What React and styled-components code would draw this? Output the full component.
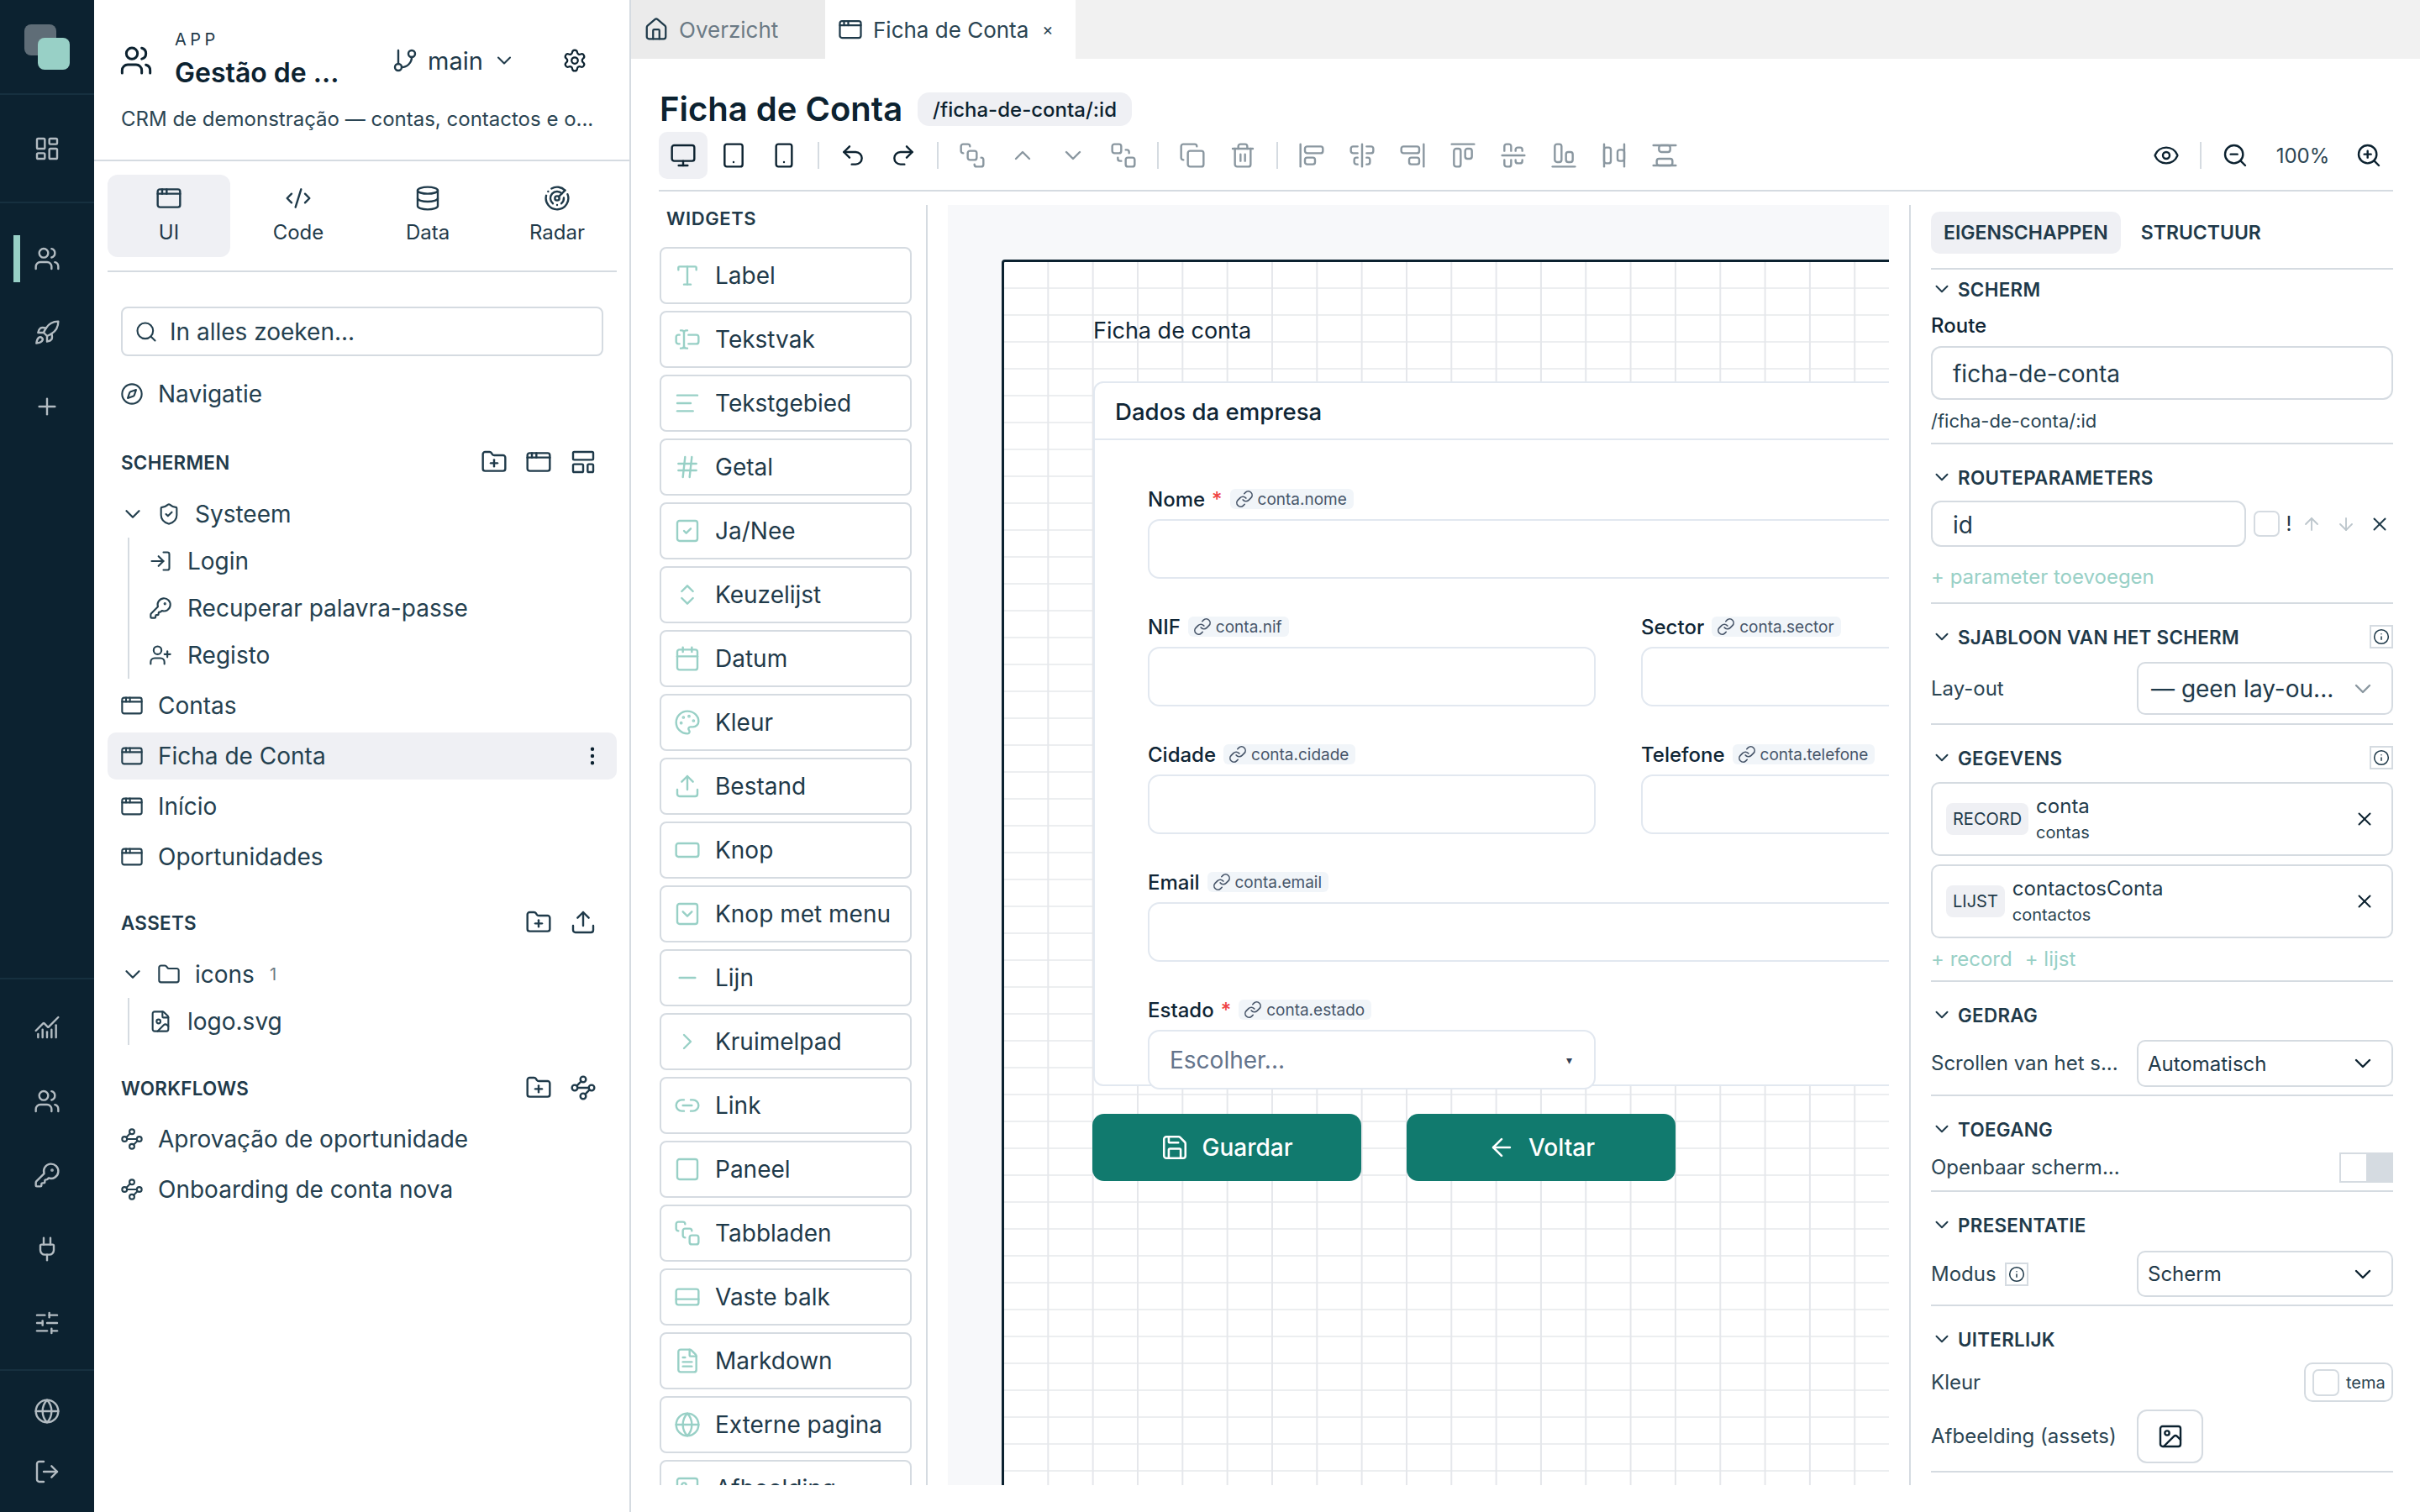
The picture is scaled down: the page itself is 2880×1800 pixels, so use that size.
import React from 'react';
import styled, { createGlobalStyle } from 'styled-components';
import {
  AlignCenterHorizontal, AlignCenterVertical, AlignEndHorizontal, AlignEndVertical,
  AlignHorizontalSpaceBetween, AlignLeft, AlignStartHorizontal, AlignStartVertical,
  AlignVerticalSpaceBetween, AppWindow, ArrowDown, ArrowLeft, ArrowUp, BringToFront,
  Calendar, ChartNoAxesCombined, ChevronDown, ChevronRight, ChevronUp, ChevronsUpDown,
  CodeXml, Compass, Copy, Database, EllipsisVertical, Eye, FileImage, FileText, Folder,
  FolderPlus, GitBranch, Globe, Hash, House, Image, Info, KeyRound, LayoutDashboard,
  LayoutTemplate, Link, Link2, LogIn, LogOut, Minus, Monitor, Palette, Plug,
  Plus, Radar, RectangleHorizontal, Redo2, Rocket, Save, Search, SendToBack, Settings,
  ShieldCheck, SlidersHorizontal, Smartphone, Square, SquareCheck, SquareChevronDown,
  SquareStack, Tablet, TextCursorInput, Trash2, Type, Undo2, Upload, UserPlus, Users,
  Waypoints, X, ZoomIn, ZoomOut,
} from 'lucide-react';

const GlobalStyle = createGlobalStyle`
  html, body {
    margin: 0;
    padding: 0;
    background: #fff;
  }
  body {
    font-family: Inter, "Noto Sans", sans-serif;
    color: #1f3a4a;
  }
  * {
    box-sizing: border-box;
  }
  .lucide {
    stroke-width: 1.8;
    flex-shrink: 0;
  }
`;

const Page = styled.div`
  display: flex;
  width: 2880px;
  height: 1800px;
  overflow: hidden;
  background: #fff;
`;

/* ---------- left rail ---------- */

const Rail = styled.nav`
  flex: 0 0 112px;
  display: flex;
  flex-direction: column;
  background: #0c2230;
  color: #b3bcc2;
`;

const RailLogo = styled.div`
  position: relative;
  height: 113px;
  border-bottom: 2px solid #16303f;
`;

const LogoBack = styled.div`
  position: absolute;
  left: 29px;
  top: 29px;
  width: 38px;
  height: 37px;
  border-radius: 8px;
  background: #5f6d77;
`;

const LogoFront = styled.div`
  position: absolute;
  left: 45px;
  top: 45px;
  width: 38px;
  height: 38px;
  border-radius: 8px;
  background: #98d0c6;
`;

const RailGroup = styled.div`
  display: flex;
  flex-direction: column;
  flex: ${(p) => (p.$grow ? 1 : 'none')};
  padding-top: ${(p) => p.$top || 0}px;
  padding-bottom: ${(p) => p.$bottom || 0}px;
  border-top: ${(p) => (p.$lineTop ? '2px solid #16303f' : 'none')};
  border-bottom: ${(p) => (p.$line ? '2px solid #16303f' : 'none')};
`;

const RailItem = styled.div`
  position: relative;
  display: flex;
  align-items: center;
  justify-content: center;
  height: ${(p) => p.$h || 88}px;

  ${(p) => p.$active && `
    &::before {
      content: '';
      position: absolute;
      left: 16px;
      top: 16px;
      width: 8px;
      height: 56px;
      background: #98d0c6;
    }
  `}
`;

/* ---------- sidebar ---------- */

const Sidebar = styled.aside`
  flex: 0 0 639px;
  min-width: 0;
  border-right: 2px solid #d5dbe1;
  display: flex;
  flex-direction: column;
`;

const AppHeader = styled.header`
  height: 192px;
  border-bottom: 2px solid #d5dbe1;
  padding: 30px 50px 0 30px;
`;

const AppRow = styled.div`
  display: flex;
  align-items: center;
  height: 84px;
  color: #0c2230;
`;

const AppTitleBox = styled.div`
  flex: 0 0 258px;
  margin-left: 26px;
  display: flex;
  flex-direction: column;
  padding-top: 1px;
`;

const AppEyebrow = styled.div`
  font-size: 20px;
  line-height: 24px;
  letter-spacing: 4.5px;
  color: #1f3a4a;
  margin-top: -4px;
`;

const AppTitle = styled.div`
  font-size: 32px;
  line-height: 40px;
  font-weight: 600;
  margin-top: 8px;
  color: #0c2230;
`;

const Branch = styled.div`
  display: flex;
  align-items: center;
  font-size: 29px;
  color: #1f3a4a;
  gap: 11px;
`;

const GearSlot = styled.div`
  margin-left: auto;
  display: flex;
`;

const AppDesc = styled.div`
  margin: 12px 0 0 2px;
  font-size: 24px;
  line-height: 32px;
  white-space: nowrap;
  color: #2b4553;
`;

const ModeTabs = styled.div`
  display: flex;
  gap: 8px;
  margin: 16px 15px 0 16px;
  padding-bottom: 16px;
  border-bottom: 2px solid #d5dbe1;
`;

const ModeTab = styled.div`
  flex: 0 0 146px;
  height: 98px;
  border-radius: 12px;
  background: ${(p) => (p.$active ? '#eff0f4' : 'transparent')};
  display: flex;
  flex-direction: column;
  align-items: center;
  padding-top: 12px;
  gap: 10px;
  font-size: 24px;
  line-height: 30px;
  color: #1f3a4a;
`;

const SearchBox = styled.div`
  display: flex;
  align-items: center;
  gap: 14px;
  height: 59px;
  margin: 41px 31px 0 32px;
  padding-left: 14px;
  border: 2px solid #d5dbe1;
  border-radius: 8px;
  font-size: 28px;
  color: #24404f;
`;

const Tree = styled.div`
  display: flex;
  flex-direction: column;
  margin: 15px 15px 0 16px;
`;

const TreeRow = styled.div`
  flex: 0 0 56px;
  display: flex;
  align-items: center;
  gap: 17px;
  margin: ${(p) => (p.$flat ? '0' : '2px 0')};
  padding-left: 15px;
  border-radius: 10px;
  font-size: 28px;
  color: #24404f;
  background: ${(p) => (p.$active ? '#eff0f4' : 'transparent')};
`;

const TreeChevron = styled.span`
  display: flex;
  margin-right: -3px;
`;

const TreeChildren = styled.div`
  margin: ${(p) => p.$before || 0}px 0 ${(p) => p.$after || 0}px 24px;
  border-left: 2px solid #d5dbe1;
`;

const TreeChild = styled.div`
  display: flex;
  align-items: center;
  gap: 18px;
  height: 56px;
  padding-left: 23px;
  font-size: 28px;
  color: #24404f;
`;

const RowMenu = styled.div`
  margin-left: auto;
  display: flex;
  padding-right: 15px;
  color: #0c2230;
`;

const Count = styled.span`
  font-size: 20px;
  color: #6b7a85;
  margin-left: 1px;
`;

const SectionHead = styled.div`
  flex: 0 0 40px;
  display: flex;
  align-items: center;
  margin-top: ${(p) => p.$top}px;
  margin-bottom: ${(p) => p.$bottom}px;
  padding: 0 24px 0 16px;
  font-size: 22.4px;
  font-weight: 600;
  letter-spacing: 0.3px;
  color: #1f3a4a;
`;

const SectionTools = styled.div`
  margin-left: auto;
  display: flex;
  gap: 21px;
  color: #1f3a4a;
`;

/* ---------- main column ---------- */

const Main = styled.main`
  flex: 1;
  min-width: 0;
  display: flex;
  flex-direction: column;
`;

const TabBar = styled.div`
  display: flex;
  height: 70px;
  background: #f1f1f1;
`;

const DocTab = styled.div`
  flex: 0 0 ${(p) => p.$w}px;
  display: flex;
  align-items: center;
  gap: 12px;
  padding-left: 15px;
  font-size: 26px;
  background: ${(p) => (p.$active ? '#fff' : '#ebebeb')};
  color: ${(p) => (p.$active ? '#2b4553' : '#6b7a85')};
`;

const DocIcon = styled.span`
  display: flex;
  color: #1f3a4a;
`;

const TabClose = styled.span`
  margin-left: 4px;
  font-size: 20px;
  color: #2b4553;
`;

const ScreenHead = styled.div`
  display: flex;
  align-items: center;
  height: 40px;
  margin: 40px 0 0 34px;
  gap: 18px;
`;

const ScreenTitle = styled.h1`
  margin: 0;
  font-size: 40px;
  line-height: 40px;
  font-weight: 600;
  color: #0c2230;
`;

const RoutePill = styled.div`
  display: flex;
  align-items: center;
  height: 40px;
  padding: 0 18px;
  border-radius: 14px;
  background: #eff0f4;
  font-size: 24px;
  font-weight: 500;
  color: #0c2230;
`;

const Toolbar = styled.div`
  display: flex;
  align-items: center;
  height: 70px;
  margin: 8px 32px 0 33px;
  padding-bottom: 14px;
  border-bottom: 2px solid #d5dbe1;
`;

const ToolBtn = styled.div`
  flex: 0 0 58px;
  height: 56px;
  margin-right: 2px;
  display: flex;
  align-items: center;
  justify-content: center;
  border-radius: 10px;
  background: ${(p) => (p.$active ? '#eff0f4' : 'transparent')};
  color: ${(p) => (p.$off ? '#8a97a0' : '#0c2230')};

  &:last-child {
    margin-right: 0;
  }
`;

const ToolSep = styled.div`
  flex: 0 0 2px;
  height: 32px;
  margin: 0 11px 0 9px;
  background: #d5dbe1;
`;

const ToolSpacer = styled.div`
  flex: 1;
`;

const ZoomText = styled.div`
  flex: 0 0 99px;
  text-align: center;
  font-size: 24px;
  color: #2b4553;
`;

const Workspace = styled.div`
  display: flex;
  height: 1524px;
  margin: 16px 32px 0 33px;
`;

/* ---------- widgets ---------- */

const WidgetPane = styled.div`
  flex: 0 0 320px;
  border-right: 2px solid #d5dbe1;
  overflow: hidden;
`;

const PaneTitle = styled.div`
  margin: 4px 0 22px 9px;
  font-size: 22px;
  line-height: 24px;
  font-weight: 600;
  letter-spacing: 0.6px;
  color: #1f3a4a;
`;

const WidgetList = styled.div`
  display: flex;
  flex-direction: column;
  gap: 8px;
  width: 300px;
  margin-left: 1px;
`;

const WidgetItem = styled.div`
  flex: 0 0 68px;
  display: flex;
  align-items: center;
  gap: 17px;
  padding-left: 15px;
  border: 2px solid #d5dbe1;
  border-radius: 8px;
  font-size: 28px;
  color: #1f3a4a;
`;

const WidgetIcon = styled.span`
  display: flex;
  color: #98d0c6;
`;

/* ---------- canvas ---------- */

const Canvas = styled.div`
  flex: 0 0 1120px;
  margin-left: 24px;
  background: #f7f8fa;
  overflow: hidden;
  padding: 65px 0 0 64px;
`;

const Frame = styled.div`
  width: 1900px;
  height: 1700px;
  border: 3px solid #0c2230;
  border-radius: 4px;
  padding: 65px 0 0 106px;
  color: #0f172a;
  background-color: #fff;
  background-image:
    linear-gradient(to right, transparent 51.33px, #e5e7eb 51.33px),
    linear-gradient(to bottom, transparent 30px, #eceef0 30px);
  background-size: 53.33px 32px;
`;

const FrameTitle = styled.div`
  font-size: 27px;
  line-height: 34px;
  color: #0f2535;
`;

const FormCard = styled.section`
  width: 1500px;
  height: 839px;
  margin-top: 43px;
  background: #fff;
  border: 2px solid #e2e8f0;
  border-radius: 12px;
`;

const FormCardHead = styled.div`
  height: 68px;
  display: flex;
  align-items: center;
  padding: 2px 0 0 24px;
  border-bottom: 2px solid #e2e8f0;
  font-size: 27.6px;
  font-weight: 500;
  color: #0f2535;
`;

const FormGrid = styled.div`
  display: grid;
  grid-template-columns: 533px 533px;
  column-gap: 54px;
  row-gap: 45px;
  padding: 58px 0 0 63px;
`;

const Field = styled.div`
  grid-column: ${(p) => (p.$full ? '1 / -1' : 'auto')};
  display: flex;
  flex-direction: column;
  gap: 12px;
`;

const FieldLabel = styled.div`
  display: flex;
  align-items: center;
  height: 24px;
  gap: 9px;
  font-size: 24px;
  font-weight: 500;
  color: #0f2535;
`;

const Star = styled.span`
  color: #ef4444;
  margin-left: -1px;
`;

const BindChip = styled.span`
  display: flex;
  align-items: center;
  height: 24px;
  padding: 0 8px 0 6px;
  gap: 5px;
  border-radius: 6px;
  background: #f1f5f9;
  font-size: 19px;
  font-weight: 400;
  color: #475569;
`;

const FormInput = styled.div`
  height: 71px;
  border: 2px solid #e2e8f0;
  border-radius: 14px;
  background: #fff;
`;

const FormSelect = styled(FormInput)`
  display: flex;
  align-items: center;
  justify-content: space-between;
  padding: 0 26px 0 24px;
  font-size: 28px;
  color: #64748b;
`;

const SelectArrow = styled.span`
  font-size: 14px;
  color: #334155;
`;

const FormActions = styled.div`
  display: flex;
  gap: 54px;
  margin: 33px 0 0 -1px;
`;

const PrimaryButton = styled.div`
  flex: 0 0 320px;
  height: 80px;
  display: flex;
  align-items: center;
  justify-content: center;
  gap: 15px;
  border-radius: 14px;
  background: #117a6e;
  color: #fff;
  font-size: 28px;
  font-weight: 500;
`;

/* ---------- properties ---------- */

const PropsPane = styled.div`
  flex: 1;
  min-width: 0;
  margin-left: 24px;
  padding-left: 24px;
  border-left: 2px solid #d5dbe1;
  overflow: hidden;
`;

const PropsTabs = styled.div`
  display: flex;
  gap: 9px;
  padding: 8px 0 17px;
  border-bottom: 2px solid #d5dbe1;
`;

const PropsTab = styled.div`
  display: flex;
  align-items: center;
  height: 50px;
  padding: 0 15px;
  border-radius: 10px;
  background: ${(p) => (p.$active ? '#eff0f4' : 'transparent')};
  font-size: 23px;
  font-weight: 600;
  color: #1f3a4a;
`;

const PropSection = styled.section`
  padding-top: ${(p) => p.$top ?? 24}px;
  padding-bottom: ${(p) => p.$bottom ?? 10}px;
  border-bottom: 2px solid #d5dbe1;
`;

const PropTitle = styled.div`
  display: flex;
  align-items: center;
  gap: 6px;
  height: 30px;
  font-size: 22.4px;
  font-weight: 600;
  letter-spacing: 0.3px;
  color: #1f3a4a;
`;

const InfoTile = styled.span`
  flex: 0 0 28px;
  width: 28px;
  height: 28px;
  margin-left: ${(p) => (p.$auto ? 'auto' : '0')};
  display: flex;
  align-items: center;
  justify-content: center;
  border: 2px solid #d5dbe1;
  color: #1f3a4a;
`;

const PropLabel = styled.div`
  font-size: 24px;
  line-height: 30px;
  white-space: nowrap;
  font-weight: ${(p) => (p.$strong ? 500 : 400)};
  margin-top: ${(p) => p.$top || 0}px;
  color: ${(p) => (p.$strong ? '#0f2535' : '#2b4553')};
  display: flex;
  align-items: center;
  gap: 10px;
`;

const TextBox = styled.div`
  display: flex;
  align-items: center;
  flex: 0 0 auto;
  height: ${(p) => p.$h}px;
  width: ${(p) => (p.$w ? `${p.$w}px` : '100%')};
  margin-top: ${(p) => p.$top || 0}px;
  padding: 2px 0 0 24px;
  border: 2px solid #d5dbe1;
  border-radius: 12px;
  font-size: 28px;
  color: #1f3a4a;
`;

const Hint = styled.div`
  margin-top: 10px;
  font-size: 22px;
  line-height: 30px;
  color: #2b4553;
`;

const ParamRow = styled.div`
  display: flex;
  align-items: center;
  margin-top: 13px;
`;

const ParamCheck = styled.span`
  flex: 0 0 31px;
  height: 31px;
  margin-left: 9px;
  border: 2px solid #d5dbe1;
  border-radius: 7px;
`;

const ParamCell = styled.span`
  flex: 0 0 ${(p) => p.$w}px;
  display: flex;
  justify-content: center;
  font-size: 24px;
  color: ${(p) => (p.$off ? '#bcc6cc' : '#1f3a4a')};
`;

const AddLink = styled.div`
  display: flex;
  gap: 15px;
  margin-top: ${(p) => p.$top}px;
  font-size: 24px;
  line-height: 30px;
  color: #98d0c6;
`;

const PropRow = styled.div`
  display: flex;
  align-items: center;
  justify-content: space-between;
  margin-top: ${(p) => p.$top}px;
`;

const SelectBox = styled.div`
  flex: 0 0 305px;
  display: flex;
  align-items: center;
  justify-content: space-between;
  height: ${(p) => p.$h}px;
  padding: 0 18px 0 ${(p) => p.$pad || 11}px;
  border: 2px solid #d5dbe1;
  border-radius: 10px;
  font-size: ${(p) => p.$size || 24}px;
  color: #1f3a4a;
`;

const SelectIcon = styled.span`
  display: flex;
  color: ${(p) => (p.$muted ? '#8a97a0' : '#0c2230')};
`;

const DataCard = styled.div`
  display: flex;
  align-items: center;
  height: 88px;
  margin-top: ${(p) => p.$top}px;
  padding: 0 19px 0 16px;
  border: 2px solid #d5dbe1;
  border-radius: 10px;
`;

const DataBadge = styled.span`
  display: flex;
  align-items: center;
  height: 38px;
  padding: 0 8px;
  border-radius: 8px;
  background: #eff0f4;
  font-size: 20px;
  color: #1f3a4a;
`;

const DataText = styled.div`
  display: flex;
  flex-direction: column;
  margin-left: 9px;
  color: #1f3a4a;
`;

const DataName = styled.div`
  font-size: 24px;
  line-height: 30px;
  margin-bottom: 2px;
`;

const DataSource = styled.div`
  font-size: 20px;
  line-height: 28px;
  color: #2b4553;
`;

const DataClose = styled.span`
  margin-left: auto;
  display: flex;
  color: #0c2230;
`;

const ToggleBox = styled.div`
  flex: 0 0 64px;
  height: 36px;
  display: flex;
  justify-content: flex-end;
  border: 2px solid #d5dbe1;
  background: #fff;
`;

const ToggleFill = styled.div`
  width: 30px;
  background: #d5dbe1;
`;

const ColorBox = styled.div`
  display: flex;
  align-items: center;
  gap: 8px;
  width: 106px;
  height: 47px;
  padding-left: 8px;
  border: 2px solid #d5dbe1;
  border-radius: 10px;
  font-size: 20px;
  color: #2b4553;
`;

const ColorSwatch = styled.span`
  flex: 0 0 32px;
  height: 32px;
  border: 2px solid #d5dbe1;
  border-radius: 7px;
`;

const ImageRow = styled(PropRow)`
  justify-content: flex-start;
`;

const ImageLabel = styled(PropLabel)`
  flex: 0 0 245px;
  min-width: 0;
`;

const ImageButton = styled.div`
  flex: 0 0 79px;
  height: 64px;
  display: flex;
  align-items: center;
  justify-content: center;
  border: 2px solid #d5dbe1;
  border-radius: 12px;
  color: #0c2230;
`;

function FixedBarIcon({ size }) {
  return (
    <svg className="lucide" width={size} height={size} viewBox="0 0 24 24" fill="none" stroke="currentColor" strokeLinecap="round" strokeLinejoin="round">
      <rect x="2" y="5" width="20" height="14" rx="2" />
      <path d="M2 14h20" />
    </svg>
  );
}

const widgets = [
  [Type, 'Label'], [TextCursorInput, 'Tekstvak'], [AlignLeft, 'Tekstgebied'], [Hash, 'Getal'],
  [SquareCheck, 'Ja/Nee'], [ChevronsUpDown, 'Keuzelijst'], [Calendar, 'Datum'], [Palette, 'Kleur'],
  [Upload, 'Bestand'], [RectangleHorizontal, 'Knop'], [SquareChevronDown, 'Knop met menu'],
  [Minus, 'Lijn'], [ChevronRight, 'Kruimelpad'], [Link2, 'Link'], [Square, 'Paneel'],
  [SquareStack, 'Tabbladen'], [FixedBarIcon, 'Vaste balk'], [FileText, 'Markdown'],
  [Globe, 'Externe pagina'], [Image, 'Afbeelding'],
];

const toolGroups = [
  [[Undo2], [Redo2]],
  [[BringToFront, 1], [ChevronUp, 1], [ChevronDown, 1], [SendToBack, 1]],
  [[Copy, 1], [Trash2, 1]],
  [
    [AlignStartVertical, 1], [AlignCenterVertical, 1], [AlignEndVertical, 1],
    [AlignStartHorizontal, 1], [AlignCenterHorizontal, 1], [AlignEndHorizontal, 1],
    [AlignHorizontalSpaceBetween, 1], [AlignVerticalSpaceBetween, 1],
  ],
];

function FieldBlock({ label, bind, required, full, children }) {
  return (
    <Field $full={full}>
      <FieldLabel>
        {label}
        {required && <Star>*</Star>}
        <BindChip><Link size={22} />{bind}</BindChip>
      </FieldLabel>
      {children || <FormInput />}
    </Field>
  );
}

function PropHead({ title, info }) {
  return (
    <PropTitle>
      <ChevronDown size={26} />
      {title}
      {info && <InfoTile $auto><Info size={20} /></InfoTile>}
    </PropTitle>
  );
}

export default function App() {
  return (
    <Page>
      <GlobalStyle />
      <Rail>
        <RailLogo><LogoBack /><LogoFront /></RailLogo>
        <RailGroup $line>
          <RailItem $h={127}><LayoutDashboard size={32} /></RailItem>
        </RailGroup>
        <RailGroup $grow $top={22}>
          <RailItem $active><Users size={32} /></RailItem>
          <RailItem><Rocket size={32} /></RailItem>
          <RailItem><Plus size={32} /></RailItem>
        </RailGroup>
        <RailGroup $lineTop $line $top={13} $bottom={11}>
          <RailItem><ChartNoAxesCombined size={32} /></RailItem>
          <RailItem><Users size={32} /></RailItem>
          <RailItem><KeyRound size={32} /></RailItem>
          <RailItem><Plug size={32} /></RailItem>
          <RailItem><SlidersHorizontal size={32} /></RailItem>
        </RailGroup>
        <RailGroup $top={12} $bottom={12}>
          <RailItem $h={72}><Globe size={32} /></RailItem>
          <RailItem $h={72}><LogOut size={32} /></RailItem>
        </RailGroup>
      </Rail>

      <Sidebar>
        <AppHeader>
          <AppRow>
            <Users size={40} />
            <AppTitleBox>
              <AppEyebrow>APP</AppEyebrow>
              <AppTitle>Gestão de ...</AppTitle>
            </AppTitleBox>
            <Branch>
              <GitBranch size={32} />
              main
              <ChevronDown size={28} />
            </Branch>
            <GearSlot><Settings size={30} /></GearSlot>
          </AppRow>
          <AppDesc>CRM de demonstração — contas, contactos e o...</AppDesc>
        </AppHeader>

        <ModeTabs>
          <ModeTab $active><AppWindow size={32} />UI</ModeTab>
          <ModeTab><CodeXml size={32} />Code</ModeTab>
          <ModeTab><Database size={32} />Data</ModeTab>
          <ModeTab><Radar size={32} />Radar</ModeTab>
        </ModeTabs>

        <SearchBox><Search size={28} />In alles zoeken...</SearchBox>

        <Tree>
          <TreeRow><Compass size={28} />Navigatie</TreeRow>
          <SectionHead $top={31} $bottom={12}>
            SCHERMEN
            <SectionTools>
              <FolderPlus size={32} /><AppWindow size={32} /><LayoutTemplate size={32} />
            </SectionTools>
          </SectionHead>
          <TreeRow>
            <TreeChevron><ChevronDown size={30} /></TreeChevron>
            <ShieldCheck size={28} />Systeem
          </TreeRow>
          <TreeChildren $before={-2} $after={2}>
            <TreeChild><LogIn size={28} />Login</TreeChild>
            <TreeChild><KeyRound size={28} />Recuperar palavra-passe</TreeChild>
            <TreeChild><UserPlus size={28} />Registo</TreeChild>
          </TreeChildren>
          <TreeRow><AppWindow size={28} />Contas</TreeRow>
          <TreeRow $active>
            <AppWindow size={28} />Ficha de Conta
            <RowMenu><EllipsisVertical size={28} /></RowMenu>
          </TreeRow>
          <TreeRow><AppWindow size={28} />Início</TreeRow>
          <TreeRow><AppWindow size={28} />Oportunidades</TreeRow>
          <SectionHead $top={28} $bottom={14}>
            ASSETS
            <SectionTools><FolderPlus size={32} /><Upload size={32} /></SectionTools>
          </SectionHead>
          <TreeRow $flat>
            <TreeChevron><ChevronDown size={30} /></TreeChevron>
            <Folder size={28} />icons<Count>1</Count>
          </TreeRow>
          <TreeChildren>
            <TreeChild><FileImage size={28} />logo.svg</TreeChild>
          </TreeChildren>
          <SectionHead $top={31} $bottom={11}>
            WORKFLOWS
            <SectionTools><FolderPlus size={32} /><Waypoints size={32} /></SectionTools>
          </SectionHead>
          <TreeRow><Waypoints size={28} />Aprovação de oportunidade</TreeRow>
          <TreeRow><Waypoints size={28} />Onboarding de conta nova</TreeRow>
        </Tree>
      </Sidebar>

      <Main>
        <TabBar>
          <DocTab $w={231}><DocIcon><House size={30} /></DocIcon>Overzicht</DocTab>
          <DocTab $w={298} $active>
            <DocIcon><AppWindow size={30} /></DocIcon>Ficha de Conta<TabClose>×</TabClose>
          </DocTab>
        </TabBar>

        <ScreenHead>
          <ScreenTitle>Ficha de Conta</ScreenTitle>
          <RoutePill>/ficha-de-conta/:id</RoutePill>
        </ScreenHead>

        <Toolbar>
          <ToolBtn $active><Monitor size={32} /></ToolBtn>
          <ToolBtn><Tablet size={32} /></ToolBtn>
          <ToolBtn><Smartphone size={32} /></ToolBtn>
          {toolGroups.map((group, i) => (
            <React.Fragment key={i}>
              <ToolSep />
              {group.map(([Icon, off], j) => (
                <ToolBtn key={j} $off={off}><Icon size={32} /></ToolBtn>
              ))}
            </React.Fragment>
          ))}
          <ToolSpacer />
          <ToolBtn><Eye size={32} /></ToolBtn>
          <ToolSep />
          <ToolBtn><ZoomOut size={32} /></ToolBtn>
          <ZoomText>100%</ZoomText>
          <ToolBtn><ZoomIn size={32} /></ToolBtn>
        </Toolbar>

        <Workspace>
          <WidgetPane>
            <PaneTitle>WIDGETS</PaneTitle>
            <WidgetList>
              {widgets.map(([Icon, name]) => (
                <WidgetItem key={name}>
                  <WidgetIcon><Icon size={32} /></WidgetIcon>
                  {name}
                </WidgetItem>
              ))}
            </WidgetList>
          </WidgetPane>

          <Canvas>
            <Frame>
              <FrameTitle>Ficha de conta</FrameTitle>
              <FormCard>
                <FormCardHead>Dados da empresa</FormCardHead>
                <FormGrid>
                  <FieldBlock label="Nome" bind="conta.nome" required full />
                  <FieldBlock label="NIF" bind="conta.nif" />
                  <FieldBlock label="Sector" bind="conta.sector" />
                  <FieldBlock label="Cidade" bind="conta.cidade" />
                  <FieldBlock label="Telefone" bind="conta.telefone" />
                  <FieldBlock label="Email" bind="conta.email" full />
                  <FieldBlock label="Estado" bind="conta.estado" required>
                    <FormSelect>Escolher...<SelectArrow>▾</SelectArrow></FormSelect>
                  </FieldBlock>
                </FormGrid>
              </FormCard>
              <FormActions>
                <PrimaryButton><Save size={34} />Guardar</PrimaryButton>
                <PrimaryButton><ArrowLeft size={34} />Voltar</PrimaryButton>
              </FormActions>
            </Frame>
          </Canvas>

          <PropsPane>
            <PropsTabs>
              <PropsTab $active>EIGENSCHAPPEN</PropsTab>
              <PropsTab>STRUCTUUR</PropsTab>
            </PropsTabs>

            <PropSection $top={8} $bottom={11}>
              <PropHead title="SCHERM" />
              <PropLabel $strong $top={14}>Route</PropLabel>
              <TextBox $h={64} $top={9}>ficha-de-conta</TextBox>
              <Hint>/ficha-de-conta/:id</Hint>
            </PropSection>

            <PropSection $bottom={15}>
              <PropHead title="ROUTEPARAMETERS" />
              <ParamRow>
                <TextBox $h={55} $w={375}>id</TextBox>
                <ParamCheck />
                <ParamCell $w={22}>!</ParamCell>
                <ParamCell $w={32} $off><ArrowUp size={24} /></ParamCell>
                <ParamCell $w={50} $off><ArrowDown size={24} /></ParamCell>
                <ParamCell $w={30}><X size={26} /></ParamCell>
              </ParamRow>
              <AddLink $top={21}>+ parameter toevoegen</AddLink>
            </PropSection>

            <PropSection>
              <PropHead title="SJABLOON VAN HET SCHERM" info />
              <PropRow $top={15}>
                <PropLabel>Lay-out</PropLabel>
                <SelectBox $h={63} $size={28} $pad={15}>
                  — geen lay-ou...
                  <SelectIcon $muted><ChevronDown size={32} /></SelectIcon>
                </SelectBox>
              </PropRow>
            </PropSection>

            <PropSection>
              <PropHead title="GEGEVENS" info />
              <DataCard $top={14}>
                <DataBadge>RECORD</DataBadge>
                <DataText>
                  <DataName>conta</DataName>
                  <DataSource>contas</DataSource>
                </DataText>
                <DataClose><X size={26} /></DataClose>
              </DataCard>
              <DataCard $top={10}>
                <DataBadge>LIJST</DataBadge>
                <DataText>
                  <DataName>contactosConta</DataName>
                  <DataSource>contactos</DataSource>
                </DataText>
                <DataClose><X size={26} /></DataClose>
              </DataCard>
              <AddLink $top={10}><span>+ record</span><span>+ lijst</span></AddLink>
            </PropSection>

            <PropSection $bottom={9}>
              <PropHead title="GEDRAG" />
              <PropRow $top={15}>
                <PropLabel>Scrollen van het s...</PropLabel>
                <SelectBox $h={56}>
                  Automatisch
                  <SelectIcon><ChevronDown size={32} /></SelectIcon>
                </SelectBox>
              </PropRow>
            </PropSection>

            <PropSection $bottom={9}>
              <PropHead title="TOEGANG" />
              <PropRow $top={13}>
                <PropLabel>Openbaar scherm...</PropLabel>
                <ToggleBox><ToggleFill /></ToggleBox>
              </PropRow>
            </PropSection>

            <PropSection $bottom={9}>
              <PropHead title="PRESENTATIE" />
              <PropRow $top={16}>
                <PropLabel>Modus<InfoTile><Info size={20} /></InfoTile></PropLabel>
                <SelectBox $h={55}>
                  Scherm
                  <SelectIcon><ChevronDown size={32} /></SelectIcon>
                </SelectBox>
              </PropRow>
            </PropSection>

            <PropSection $bottom={9}>
              <PropHead title="UITERLIJK" />
              <PropRow $top={13}>
                <PropLabel>Kleur</PropLabel>
                <ColorBox><ColorSwatch />tema</ColorBox>
              </PropRow>
              <ImageRow $top={9}>
                <ImageLabel>Afbeelding (assets)</ImageLabel>
                <ImageButton><Image size={32} /></ImageButton>
              </ImageRow>
            </PropSection>
          </PropsPane>
        </Workspace>
      </Main>
    </Page>
  );
}
